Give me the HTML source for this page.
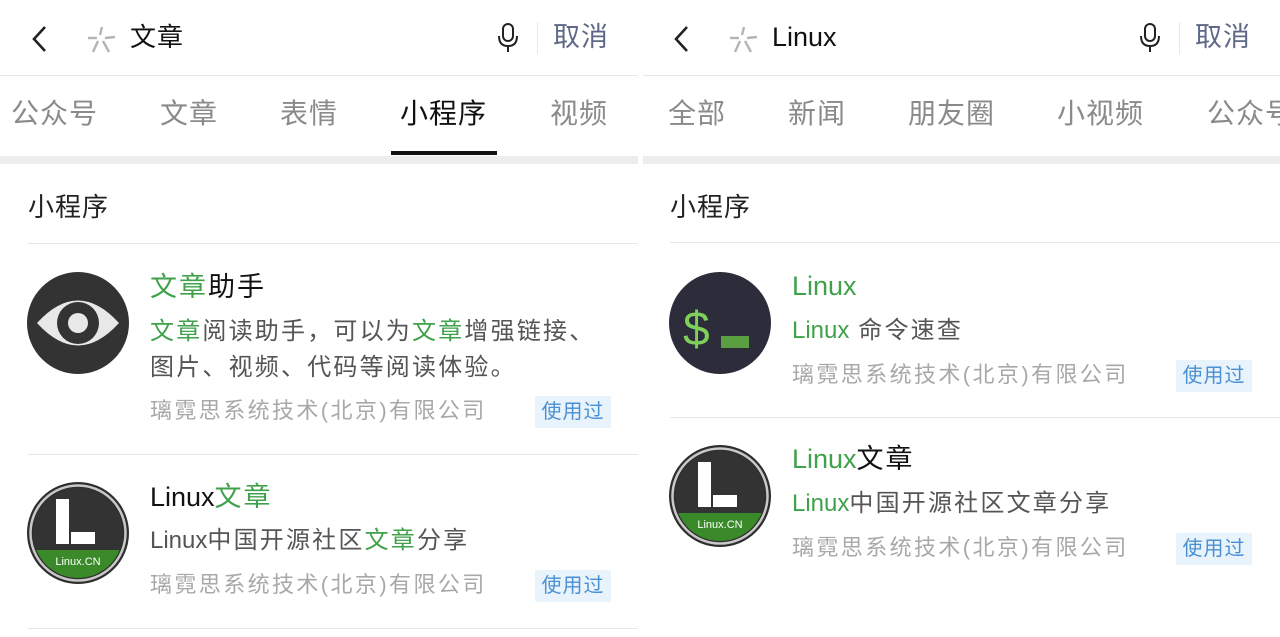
<!DOCTYPE html>
<html><head><meta charset="utf-8"><style>
*{margin:0;padding:0;box-sizing:border-box}
body{width:1280px;height:637px;background:#fff;position:relative;overflow:hidden;font-family:"Liberation Sans","Noto Sans CJK SC",sans-serif}
.a{position:absolute;white-space:nowrap}
.g{color:#3fa14a}
.l{letter-spacing:0}
.hr{position:absolute;height:1px;background:#e6e6e6}
.tab{position:absolute;white-space:nowrap;top:97px;font-size:28px;line-height:34px;color:#8a8a8a;letter-spacing:1px}
.cancel{font-size:27px;color:#5d6987;top:20px;line-height:34px;letter-spacing:1px}
.sec{font-size:26px;color:#222;line-height:32px;letter-spacing:1px}
.t{font-size:27px;line-height:32px;color:#111;letter-spacing:2px}
.d{font-size:24px;line-height:30px;color:#555;letter-spacing:2.2px}
.c{font-size:22px;line-height:28px;color:#a8a8a8;letter-spacing:2.4px}
.b{position:absolute;width:76px;height:32px;background:#e9f3fb;color:#4a90d2;font-size:20px;line-height:32px;text-align:center;letter-spacing:1px;border-radius:2px}
.band{position:absolute;top:156px;height:8px;background:#ededed}
</style></head><body>

<!-- LEFT PANEL -->
<svg class="a" style="left:26px;top:24px" width="24" height="30"><path d="M19 3 L8 15 L19 27" stroke="#222" stroke-width="2.6" fill="none"/></svg>
<svg class="a" style="left:86px;top:24px" width="32" height="30"><g stroke="#b4b4b4" stroke-width="2.4" fill="none"><path d="M16 3 L14 11"/><path d="M2 14 L11 14"/><path d="M19 14 L29 13"/><path d="M12 17 L7 28"/><path d="M17 17 L23 28"/></g></svg>
<div class="a" style="left:130px;top:20px;font-size:26px;line-height:34px;color:#111;letter-spacing:1px">文章</div>
<svg class="a" style="left:496px;top:22px" width="24" height="32"><rect x="7" y="2" width="10" height="17" rx="5" stroke="#222" stroke-width="2" fill="none"/><path d="M3 14 Q3 24 12 24 Q21 24 21 14 M12 24 L12 30" stroke="#222" stroke-width="2" fill="none"/></svg>
<div class="a" style="left:537px;top:22px;width:1px;height:32px;background:#e8e8e8"></div>
<div class="a cancel" style="left:553px">取消</div>
<div class="hr" style="left:0;top:75px;width:638px"></div>

<div class="tab" style="left:11px">公众号</div>
<div class="tab" style="left:160px">文章</div>
<div class="tab" style="left:280px">表情</div>
<div class="tab" style="left:400px;color:#111">小程序</div>
<div class="tab" style="left:550px">视频</div>
<div class="a" style="left:391px;top:151px;width:106px;height:4px;background:#111"></div>
<div class="band" style="left:0;width:638px"></div>

<div class="a sec" style="left:28px;top:191px">小程序</div>
<div class="hr" style="left:28px;top:243px;width:610px"></div>

<svg class="a" style="left:27px;top:272px" width="102" height="102"><circle cx="51" cy="51" r="51" fill="#333"/><path d="M10 51 Q51 6 92 51 Q51 96 10 51Z" fill="#e8e8e8"/><circle cx="51" cy="51" r="21" fill="#333"/><circle cx="51" cy="51" r="10" fill="#e8e8e8"/></svg>
<div class="a t" style="left:150px;top:271px"><span class="g">文章</span>助手</div>
<div class="a d" style="left:150px;top:317px"><span class="g">文章</span>阅读助手，可以为<span class="g">文章</span>增强链接、</div>
<div class="a d" style="left:150px;top:353px">图片、视频、代码等阅读体验。</div>
<div class="a c" style="left:150px;top:397px">璃霓思系统技术(北京)有限公司</div>
<div class="b" style="left:535px;top:396px">使用过</div>
<div class="hr" style="left:28px;top:454px;width:610px"></div>

<svg class="a" style="left:27px;top:482px" width="102" height="102"><defs><clipPath id="cl1"><circle cx="51" cy="51" r="45"/></clipPath></defs><circle cx="51" cy="51" r="51" fill="#2e2e2e"/><circle cx="51" cy="51" r="47.5" fill="none" stroke="#c8c8c8" stroke-width="2.5"/><g clip-path="url(#cl1)"><rect x="0" y="0" width="102" height="102" fill="#333"/><rect x="0" y="68" width="102" height="40" fill="#3b8a2a"/></g><rect x="29" y="17" width="13" height="45" fill="#fff"/><rect x="44" y="50" width="24" height="12" fill="#fff"/><text x="51" y="83" font-size="11" fill="#fff" text-anchor="middle" font-family="Liberation Sans">Linux.CN</text></svg>
<div class="a t" style="left:150px;top:481px"><span class="l">Linux</span><span class="g">文章</span></div>
<div class="a d" style="left:150px;top:526px"><span class="l">Linux</span>中国开源社区<span class="g">文章</span>分享</div>
<div class="a c" style="left:150px;top:571px">璃霓思系统技术(北京)有限公司</div>
<div class="b" style="left:535px;top:570px">使用过</div>
<div class="hr" style="left:28px;top:628px;width:610px"></div>

<!-- RIGHT PANEL -->
<svg class="a" style="left:668px;top:24px" width="24" height="30"><path d="M19 3 L8 15 L19 27" stroke="#222" stroke-width="2.6" fill="none"/></svg>
<svg class="a" style="left:728px;top:24px" width="32" height="30"><g stroke="#b4b4b4" stroke-width="2.4" fill="none"><path d="M16 3 L14 11"/><path d="M2 14 L11 14"/><path d="M19 14 L29 13"/><path d="M12 17 L7 28"/><path d="M17 17 L23 28"/></g></svg>
<div class="a" style="left:772px;top:20px;font-size:27px;line-height:34px;color:#111">Linux</div>
<svg class="a" style="left:1138px;top:22px" width="24" height="32"><rect x="7" y="2" width="10" height="17" rx="5" stroke="#222" stroke-width="2" fill="none"/><path d="M3 14 Q3 24 12 24 Q21 24 21 14 M12 24 L12 30" stroke="#222" stroke-width="2" fill="none"/></svg>
<div class="a" style="left:1179px;top:22px;width:1px;height:32px;background:#e8e8e8"></div>
<div class="a cancel" style="left:1195px">取消</div>
<div class="hr" style="left:643px;top:75px;width:637px"></div>

<div class="tab" style="left:668px">全部</div>
<div class="tab" style="left:788px">新闻</div>
<div class="tab" style="left:908px">朋友圈</div>
<div class="tab" style="left:1057px">小视频</div>
<div class="tab" style="left:1207px">公众号</div>
<div class="band" style="left:643px;width:637px"></div>

<div class="a sec" style="left:670px;top:191px">小程序</div>
<div class="hr" style="left:670px;top:242px;width:610px"></div>

<svg class="a" style="left:669px;top:272px" width="102" height="102"><circle cx="51" cy="51" r="51" fill="#2c2c3a"/><text x="14" y="73" font-size="48" fill="#7fd05a" font-family="Liberation Sans">$</text><rect x="52" y="64" width="28" height="12" fill="#5aa040"/></svg>
<div class="a t" style="left:792px;top:270px"><span class="g l">Linux</span></div>
<div class="a d" style="left:792px;top:316px"><span class="g l">Linux</span> 命令速查</div>
<div class="a c" style="left:792px;top:361px">璃霓思系统技术(北京)有限公司</div>
<div class="b" style="left:1176px;top:360px">使用过</div>
<div class="hr" style="left:670px;top:417px;width:610px"></div>

<svg class="a" style="left:669px;top:445px" width="102" height="102"><defs><clipPath id="cl2"><circle cx="51" cy="51" r="45"/></clipPath></defs><circle cx="51" cy="51" r="51" fill="#2e2e2e"/><circle cx="51" cy="51" r="47.5" fill="none" stroke="#c8c8c8" stroke-width="2.5"/><g clip-path="url(#cl2)"><rect x="0" y="0" width="102" height="102" fill="#333"/><rect x="0" y="68" width="102" height="40" fill="#3b8a2a"/></g><rect x="29" y="17" width="13" height="45" fill="#fff"/><rect x="44" y="50" width="24" height="12" fill="#fff"/><text x="51" y="83" font-size="11" fill="#fff" text-anchor="middle" font-family="Liberation Sans">Linux.CN</text></svg>
<div class="a t" style="left:792px;top:443px"><span class="g l">Linux</span>文章</div>
<div class="a d" style="left:792px;top:489px"><span class="g l">Linux</span>中国开源社区文章分享</div>
<div class="a c" style="left:792px;top:534px">璃霓思系统技术(北京)有限公司</div>
<div class="b" style="left:1176px;top:533px">使用过</div>

</body></html>
